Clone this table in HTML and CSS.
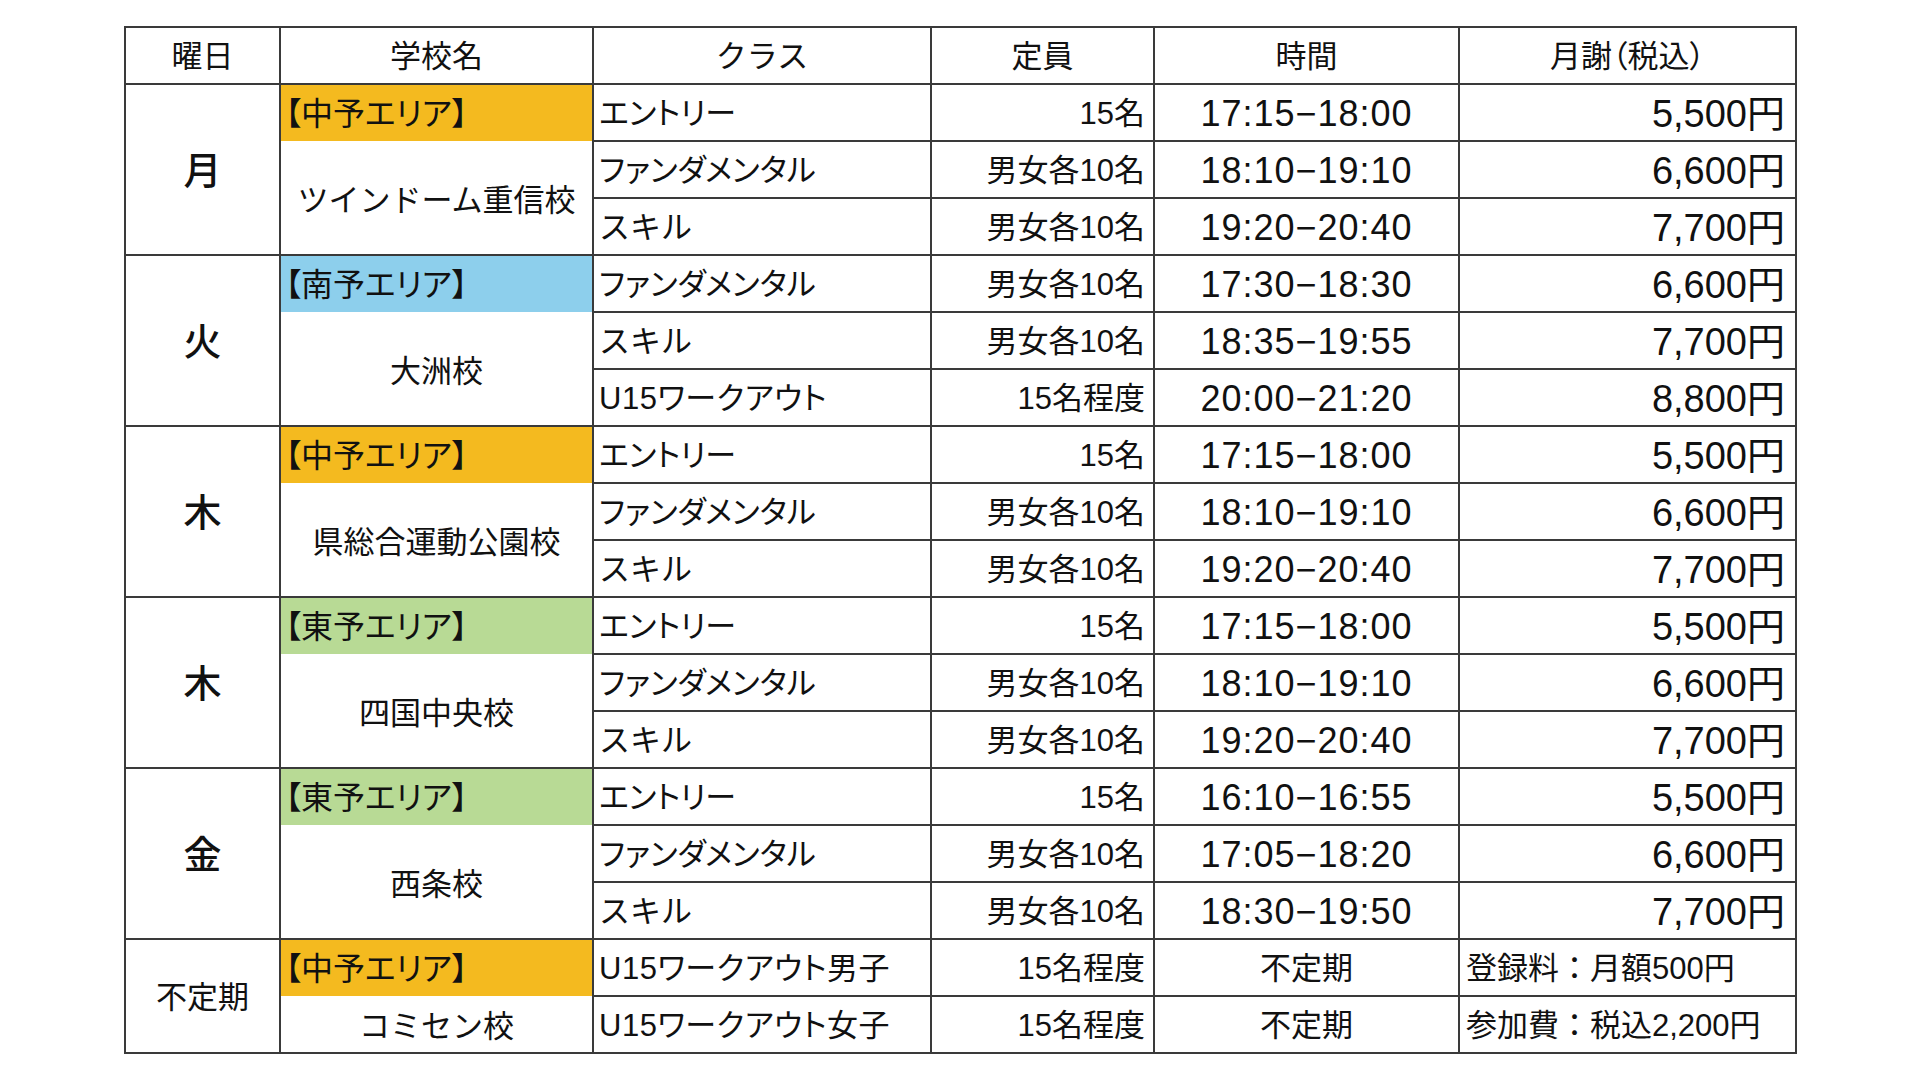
FILE: index.html
```html
<!DOCTYPE html>
<html lang="ja">
<head>
<meta charset="utf-8">
<title>スケジュール</title>
<link rel="stylesheet" href="styles.css">
</head>
<body>
<div class="page">
<table class="sched">
  <colgroup>
    <col class="c-day"><col class="c-school"><col class="c-class"><col class="c-cap"><col class="c-time"><col class="c-fee">
  </colgroup>
  <thead>
    <tr>
      <th>曜日</th><th>学校名</th><th>クラス</th><th>定員</th><th>時間</th><th class="palt">月謝（税込）</th>
    </tr>
  </thead>
  <tbody>
    <tr>
      <td class="day" rowspan="3">月</td>
      <td class="area chuyo">【中予エリア】</td>
      <td class="cls palt">エントリー</td><td class="cap">15名</td><td class="time">17:15−18:00</td><td class="fee">5,500円</td>
    </tr>
    <tr>
      <td class="school" rowspan="2">ツインドーム重信校</td>
      <td class="cls palt">ファンダメンタル</td><td class="cap">男女各10名</td><td class="time">18:10−19:10</td><td class="fee">6,600円</td>
    </tr>
    <tr>
      <td class="cls">スキル</td><td class="cap">男女各10名</td><td class="time">19:20−20:40</td><td class="fee">7,700円</td>
    </tr>

    <tr>
      <td class="day" rowspan="3">火</td>
      <td class="area nanyo">【南予エリア】</td>
      <td class="cls palt">ファンダメンタル</td><td class="cap">男女各10名</td><td class="time">17:30−18:30</td><td class="fee">6,600円</td>
    </tr>
    <tr>
      <td class="school" rowspan="2">大洲校</td>
      <td class="cls">スキル</td><td class="cap">男女各10名</td><td class="time">18:35−19:55</td><td class="fee">7,700円</td>
    </tr>
    <tr>
      <td class="cls u15">U15ワークアウト</td><td class="cap">15名程度</td><td class="time">20:00−21:20</td><td class="fee">8,800円</td>
    </tr>

    <tr>
      <td class="day" rowspan="3">木</td>
      <td class="area chuyo">【中予エリア】</td>
      <td class="cls palt">エントリー</td><td class="cap">15名</td><td class="time">17:15−18:00</td><td class="fee">5,500円</td>
    </tr>
    <tr>
      <td class="school" rowspan="2">県総合運動公園校</td>
      <td class="cls palt">ファンダメンタル</td><td class="cap">男女各10名</td><td class="time">18:10−19:10</td><td class="fee">6,600円</td>
    </tr>
    <tr>
      <td class="cls">スキル</td><td class="cap">男女各10名</td><td class="time">19:20−20:40</td><td class="fee">7,700円</td>
    </tr>

    <tr>
      <td class="day" rowspan="3">木</td>
      <td class="area toyo">【東予エリア】</td>
      <td class="cls palt">エントリー</td><td class="cap">15名</td><td class="time">17:15−18:00</td><td class="fee">5,500円</td>
    </tr>
    <tr>
      <td class="school" rowspan="2">四国中央校</td>
      <td class="cls palt">ファンダメンタル</td><td class="cap">男女各10名</td><td class="time">18:10−19:10</td><td class="fee">6,600円</td>
    </tr>
    <tr>
      <td class="cls">スキル</td><td class="cap">男女各10名</td><td class="time">19:20−20:40</td><td class="fee">7,700円</td>
    </tr>

    <tr>
      <td class="day" rowspan="3">金</td>
      <td class="area toyo">【東予エリア】</td>
      <td class="cls palt">エントリー</td><td class="cap">15名</td><td class="time">16:10−16:55</td><td class="fee">5,500円</td>
    </tr>
    <tr>
      <td class="school" rowspan="2">西条校</td>
      <td class="cls palt">ファンダメンタル</td><td class="cap">男女各10名</td><td class="time">17:05−18:20</td><td class="fee">6,600円</td>
    </tr>
    <tr>
      <td class="cls">スキル</td><td class="cap">男女各10名</td><td class="time">18:30−19:50</td><td class="fee">7,700円</td>
    </tr>

    <tr>
      <td class="day small" rowspan="2">不定期</td>
      <td class="area chuyo">【中予エリア】</td>
      <td class="cls u15">U15ワークアウト男子</td><td class="cap">15名程度</td><td class="time small">不定期</td><td class="note">登録料：月額500円</td>
    </tr>
    <tr>
      <td class="school single">コミセン校</td>
      <td class="cls u15">U15ワークアウト女子</td><td class="cap">15名程度</td><td class="time small">不定期</td><td class="note">参加費：税込2,200円</td>
    </tr>
  </tbody>
</table>
</div>
</body>
</html>
```

FILE: styles.css
```css
html, body {
  margin: 0;
  padding: 0;
  background: #ffffff;
}

.page {
  padding: 26px 0 0 124px;
}

.sched {
  border-collapse: collapse;
  table-layout: fixed;
  width: 1671px;
  font-family: "Liberation Sans", "Noto Sans CJK JP", sans-serif;
  color: #111111;
  font-size: 31px;
}

.c-day { width: 155px; }
.c-school { width: 313px; }
.c-class { width: 338px; }
.c-cap { width: 223px; }
.c-time { width: 305px; }
.c-fee { width: 337px; }

.sched th,
.sched td {
  border: 2px solid #3a3a3a;
  height: 53px;
  padding: 2px 0 0 0;
  line-height: 1;
  vertical-align: middle;
  white-space: nowrap;
  overflow: hidden;
}

.sched th {
  font-weight: 400;
  text-align: center;
}

.palt {
  font-feature-settings: "palt";
}

.day {
  text-align: center;
  font-size: 38px;
  font-weight: 500;
}

.day.small {
  font-size: 31px;
  font-weight: 400;
}

.area {
  text-align: left;
  padding-left: 4px !important;
  font-size: 32px;
  font-feature-settings: "palt";
  border-bottom: 2px hidden !important;
}

.chuyo { background: #f4ba1f; }
.nanyo { background: #8dcfec; }
.toyo { background: #b8da95; }

.school {
  text-align: center;
  border-top: 2px hidden !important;
  padding-top: 6px !important;
}

.school.single {
  padding-top: 4px !important;
  height: 51px;
}

.cls {
  text-align: left;
  padding-left: 5px !important;
}

.cls.u15 {
  font-feature-settings: "palt";
  letter-spacing: 0.5px;
}

.cap {
  text-align: right;
  padding-right: 8px !important;
}

.time {
  text-align: center;
  font-size: 36px;
  letter-spacing: 1px;
}

.time.small {
  font-size: 31px;
  letter-spacing: 0;
}

.fee {
  text-align: right;
  font-size: 38px;
  padding-right: 10px !important;
}

.note {
  text-align: left;
  padding-left: 6px !important;
}
```
